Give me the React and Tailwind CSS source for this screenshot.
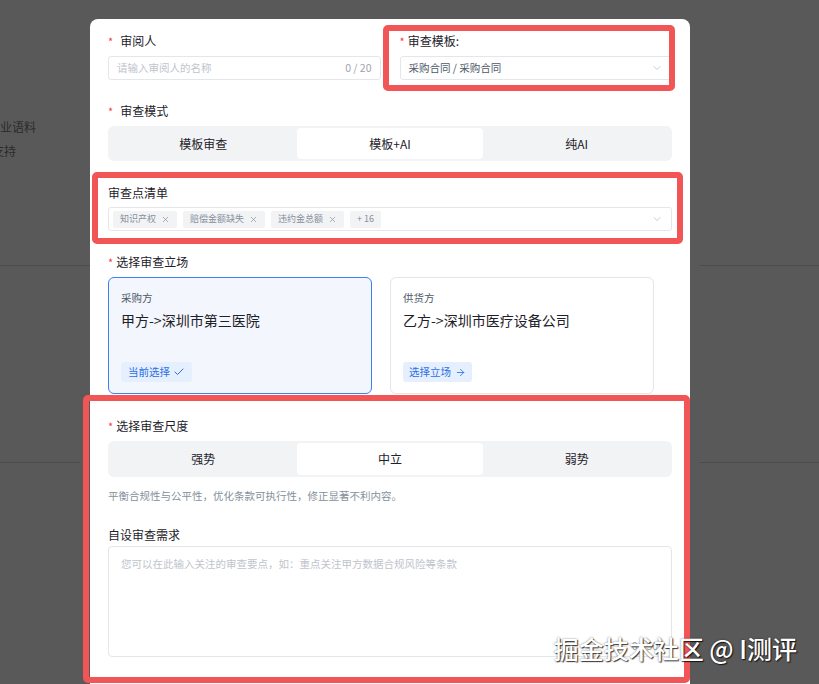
import React from "react";
import { ChevronDown, X, Check, ArrowRight } from "lucide-react";

function Label({ children, req = true, gap = "mr-[7px]", className = "" }) {
  return (
    <div className={`flex h-[16px] items-center text-[12px] leading-[16px] text-[#1d2129] ${className}`}>
      {req && <span className={`text-[#f53f3f] text-[11px] ${gap}`}>*</span>}
      <span>{children}</span>
    </div>
  );
}

function Segmented({ items, active, h = "h-[35px]" }) {
  return (
    <div className={`flex ${h} rounded-[6px] bg-[#f2f3f5] p-[2px]`}>
      {items.map((it, i) => (
        <div
          key={it}
          className={`flex flex-1 items-center justify-center text-[12px] text-[#1d2129] ${
            i === active ? "rounded-[4px] bg-white" : ""
          }`}
        >
          {it}
        </div>
      ))}
    </div>
  );
}

function Tag({ children, close = true }) {
  return (
    <div className="flex h-[17px] items-center gap-[5px] rounded-[2px] bg-[#f2f3f5] px-[7px] text-[9px] text-[#86909c]">
      <span>{children}</span>
      {close && <X size={9} strokeWidth={1.8} className="text-[#86909c]" />}
    </div>
  );
}

export default function App() {
  return (
    <div className="relative h-[684px] w-[819px] overflow-hidden bg-[#595959] font-['Noto_Sans_CJK_SC','Noto_Sans',sans-serif]">
      {/* background page fragments */}
      <div className="absolute left-[-12px] top-[119px] text-[12px] leading-[16px] text-[#2b2b2b]">专业语料</div>
      <div className="absolute left-[-8px] top-[143px] text-[12px] leading-[16px] text-[#2b2b2b]">支持</div>
      <div className="absolute left-0 top-[265px] h-px w-[90px] bg-[#4c4c4c]" />
      <div className="absolute left-[700px] top-[265px] h-px w-[119px] bg-[#4c4c4c]" />
      <div className="absolute left-0 top-[462px] h-px w-[80px] bg-[#4c4c4c]" />
      <div className="absolute left-[700px] top-[462px] h-px w-[119px] bg-[#4c4c4c]" />

      {/* modal */}
      <div className="relative ml-[90px] mt-[19px] h-[665px] w-[600px] rounded-t-[8px] bg-white px-[18px] pt-[14px]">
        <div className="grid grid-cols-2 gap-[19px]">
          <div>
            <Label>审阅人</Label>
            <div className="mt-[7px] flex h-[24px] items-center justify-between rounded-[3px] border border-[#e5e6eb] px-[8px] text-[10.5px]">
              <span className="text-[#c0c4cc]">请输入审阅人的名称</span>
              <span className="text-[#a0a4ab]">0 / 20</span>
            </div>
          </div>
          <div>
            <Label gap="mr-[3px]">审查模板:</Label>
            <div className="mt-[7px] flex h-[24px] items-center justify-between rounded-[3px] border border-[#e5e6eb] pl-[8px] pr-[8px] text-[10.5px]">
              <span className="text-[#4e5969]">采购合同 / 采购合同</span>
              <ChevronDown size={12} strokeWidth={1.3} className="text-[#a9aeb8]" />
            </div>
          </div>
        </div>

        <Label className="mt-[23px]">审查模式</Label>
        <div className="mt-[7px]">
          <Segmented items={["模板审查", "模板+AI", "纯AI"]} active={1} />
        </div>

        <Label req={false} className="mt-[24px]">审查点清单</Label>
        <div className="mt-[6px] flex h-[24px] items-center justify-between rounded-[3px] border border-[#e5e6eb] pl-[4px] pr-[8px]">
          <div className="flex items-center gap-[6px]">
            <Tag>知识产权</Tag>
            <Tag>赔偿金额缺失</Tag>
            <Tag>违约金总额</Tag>
            <Tag close={false}>+ 16</Tag>
          </div>
          <ChevronDown size={12} strokeWidth={1.3} className="text-[#a9aeb8]" />
        </div>

        <Label gap="mr-[3px]" className="mt-[23px]">选择审查立场</Label>
        <div className="mt-[7px] flex gap-[18px]">
          <div className="flex h-[117px] w-[264px] flex-col rounded-[6px] border border-[#3d80f0] bg-[#f3f6fc] px-[12px] pb-[11px] pt-[12px]">
            <div className="text-[10.5px] leading-[16px] text-[#4e5969]">采购方</div>
            <div className="mt-[4px] text-[14px] leading-[20px] text-[#1d2129]">甲方-&gt;深圳市第三医院</div>
            <div className="mt-auto">
              <div className="inline-flex h-[20px] items-center gap-[3px] rounded-[3px] bg-[#e6effd] px-[7px] text-[10.5px] text-[#2a6fe6]">
                当前选择
                <Check size={12} strokeWidth={2} />
              </div>
            </div>
          </div>
          <div className="flex h-[117px] w-[264px] flex-col rounded-[6px] border border-[#e5e6eb] bg-white px-[12px] pb-[11px] pt-[12px]">
            <div className="text-[10.5px] leading-[16px] text-[#4e5969]">供货方</div>
            <div className="mt-[4px] text-[14px] leading-[20px] text-[#1d2129]">乙方-&gt;深圳市医疗设备公司</div>
            <div className="mt-auto">
              <div className="inline-flex h-[20px] items-center gap-[4px] rounded-[3px] bg-[#e6effd] px-[6px] text-[10.5px] text-[#2a6fe6]">
                选择立场
                <ArrowRight size={11} strokeWidth={1.8} />
              </div>
            </div>
          </div>
        </div>

        <Label gap="mr-[3px]" className="mt-[24px]">选择审查尺度</Label>
        <div className="mt-[7px]">
          <Segmented items={["强势", "中立", "弱势"]} active={1} h="h-[36px]" />
        </div>
        <div className="mt-[11px] text-[10.5px] leading-[16px] text-[#86909c]">
          平衡合规性与公平性，优化条款可执行性，修正显著不利内容。
        </div>

        <Label req={false} className="mt-[23px]">自设审查需求</Label>
        <div className="relative mt-[3px] h-[111px] rounded-[4px] border border-[#e5e6eb] px-[12px] pt-[9px] text-[10.5px] leading-[16px] text-[#c0c4cc]">
          您可以在此输入关注的审查要点，如：重点关注甲方数据合规风险等条款
          <span className="absolute bottom-[2px] right-[7px] text-[#a0a4ab]">0 / 500</span>
        </div>
      </div>

      {/* annotation boxes */}
      <div className="pointer-events-none absolute left-[383px] top-[25px] h-[66px] w-[292px] rounded-[5px] border-[6px] border-[#f25555]" />
      <div className="pointer-events-none absolute left-[92px] top-[172px] h-[72px] w-[591px] rounded-[5px] border-[6px] border-[#f25555]" />
      <div className="pointer-events-none absolute left-[83px] top-[395px] h-[288px] w-[607px] rounded-[5px] border-[6px] border-[#f25555]" />

      {/* watermark */}
      <div className="pointer-events-none absolute right-[22px] top-[631px] text-[25px] leading-[34px] font-medium text-white [text-shadow:1px_1px_1px_rgba(0,0,0,0.75),0_0_2px_rgba(0,0,0,0.5)]">
        掘金技术社区 @ I测评
      </div>
    </div>
  );
}
